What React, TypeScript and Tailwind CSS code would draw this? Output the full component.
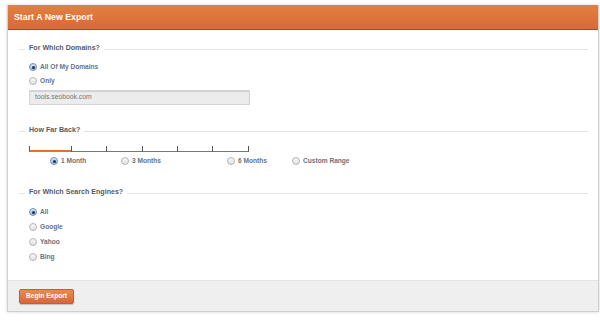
import React from "react";

interface IOption {
    label: string,
    checked?: boolean,
}

const engines: IOption[] = [
    { label: "All", checked: true },
    { label: "Google" },
    { label: "Yahoo" },
    { label: "Bing" },
];

const Radio = ({ checked }: { checked?: boolean }): JSX.Element => {
    if (checked) {
        return (
            <span className="w-[8px] h-[8px] rounded-full border border-[#6f8fbf] bg-gradient-to-b from-[#d6e4f7] to-[#9dbbe6] flex items-center justify-center shrink-0">
                <span className="w-[3px] h-[3px] rounded-full bg-[#1d2f4f]" />
            </span>
        )
    }
    return (
        <span className="w-[8px] h-[8px] rounded-full border border-[#b5b5b5] bg-gradient-to-b from-[#f7f7f7] to-[#e2e2e2] shrink-0" />
    )
}

const RadioLabel = ({ label, checked }: IOption): JSX.Element => {
    return (
        <div className="flex items-center gap-[3px] h-[8px]">
            <Radio checked={checked} />
            <span className="text-[6.6px] font-bold text-[#6b7280] leading-none">{label}</span>
        </div>
    )
}

const Legend = ({ title }: { title: string }): JSX.Element => {
    return (
        <div className="flex items-center h-[10px]">
            <div className="w-[6px] h-px bg-[#e3e3e3]" />
            <span className="px-[4px] text-[7.1px] font-bold text-[#585c62] leading-none">{title}</span>
            <div className="flex-1 h-px bg-[#e3e3e3]" />
        </div>
    )
}

const App: React.FC = (): JSX.Element => {
    return (
        <div className="w-[600px] h-[325px] bg-white pt-[5px] pl-[7px] font-['Liberation_Sans',Arial,sans-serif]">
            <div className="w-[592px] h-[307px] flex flex-col border border-[#cfcfcf] border-t-0 shadow-[0_0_3px_rgba(0,0,0,0.18)]">
                <div className="h-[25px] shrink-0 bg-gradient-to-b from-[#e2813f] to-[#d9683a] border-b border-[#98502c] flex items-center pl-[6px]">
                    <span className="text-[8.8px] font-bold text-white leading-none">Start A New Export</span>
                </div>

                <main className="flex-1 bg-white pl-[11px] pr-[10px] pt-[14px]">
                    <Legend title="For Which Domains?" />
                    <div className="pl-[10px] pt-[9px] flex flex-col gap-[6px]">
                        <RadioLabel label="All Of My Domains" checked />
                        <RadioLabel label="Only" />
                    </div>
                    <div className="ml-[10px] mt-[5px] w-[221px] h-[15px] bg-[#ececec] border border-[#d4d4d4] shadow-[inset_0_1px_1px_rgba(0,0,0,0.12)] flex items-center pl-[5px]">
                        <span className="text-[6.8px] text-[#777] leading-none">tools.seobook.com</span>
                    </div>

                    <div className="mt-[21px]">
                        <Legend title="How Far Back?" />
                    </div>
                    <div className="ml-[10px] mt-[10px] flex items-end h-[6px]">
                        <div className="w-[42px] h-[6px] border-l border-[#555] border-b-2 border-b-[#e0742f]" />
                        <div className="w-[35px] h-[6px] border-l border-[#555] border-b border-b-[#777]" />
                        <div className="w-[36px] h-[6px] border-l border-[#555] border-b border-b-[#777]" />
                        <div className="w-[35px] h-[6px] border-l border-[#555] border-b border-b-[#777]" />
                        <div className="w-[35px] h-[6px] border-l border-[#555] border-b border-b-[#777]" />
                        <div className="w-[37px] h-[6px] border-x border-[#555] border-b border-b-[#777]" />
                    </div>
                    <div className="ml-[31px] mt-[5px] flex items-center">
                        <div className="w-[71px]"><RadioLabel label="1 Month" checked /></div>
                        <div className="w-[106px]"><RadioLabel label="3 Months" /></div>
                        <div className="w-[65px]"><RadioLabel label="6 Months" /></div>
                        <RadioLabel label="Custom Range" />
                    </div>

                    <div className="mt-[23px]">
                        <Legend title="For Which Search Engines?" />
                    </div>
                    <div className="pl-[10px] pt-[10px] flex flex-col gap-[7px]">
                        {
                            engines.map((engine: IOption, index: number) => {
                                return <RadioLabel key={index} label={engine.label} checked={engine.checked} />
                            })
                        }
                    </div>
                </main>

                <div className="h-[31px] shrink-0 bg-[#efefef] border-t border-[#e4e4e4] flex items-center pl-[11px]">
                    <button className="w-[55px] h-[15px] rounded-[2px] bg-gradient-to-b from-[#e88b4e] to-[#d8663a] border border-[#c65e31] shadow-[0_1px_1px_rgba(0,0,0,0.2)] text-[6.6px] font-bold text-white leading-none">
                        Begin Export
                    </button>
                </div>
            </div>
        </div>
    )
}

export default App
